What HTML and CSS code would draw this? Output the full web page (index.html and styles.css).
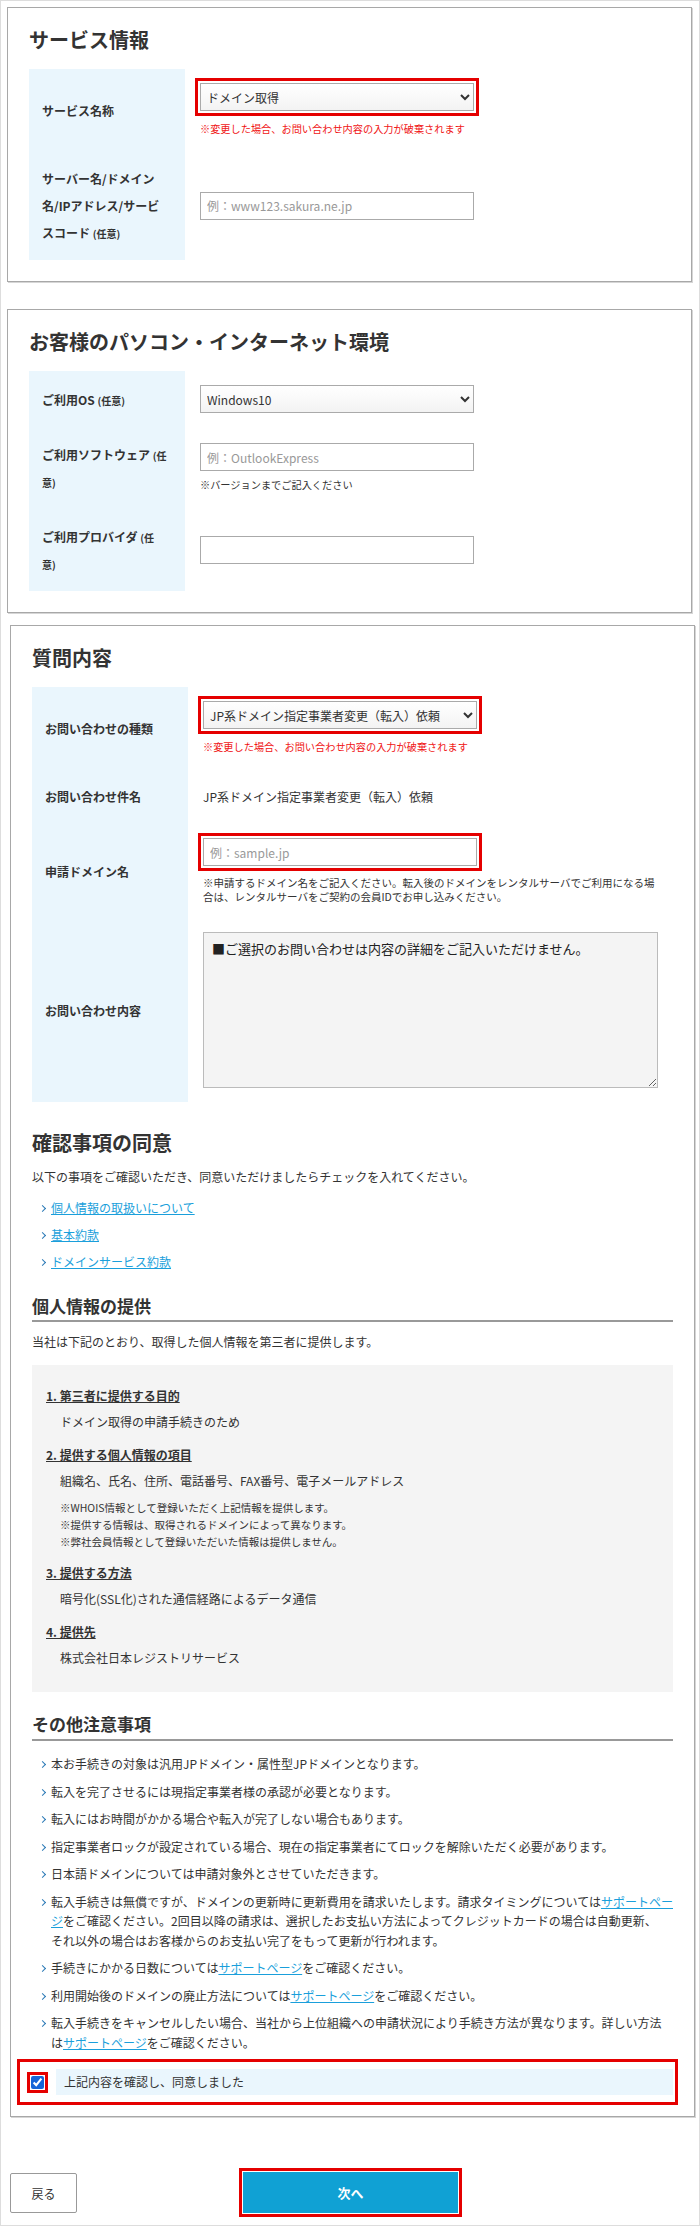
FILE: index.html
```html
<!DOCTYPE html>
<html lang="ja">

<head>
    <meta charset="utf-8">
    <title>お問い合わせフォーム</title>
    <link rel="stylesheet" href="styles.css">
</head>

<body>
    <div class="page">

        <section class="panel">
            <h2>サービス情報</h2>
            <table class="form">
                <tr>
                    <th>サービス名称</th>
                    <td>
                        <select class="field marked">
                            <option>ドメイン取得</option>
                        </select>
                        <p class="warn">※変更した場合、お問い合わせ内容の入力が破棄されます</p>
                    </td>
                </tr>
                <tr>
                    <th>サーバー名/ドメイン<br>名/IPアドレス/サービ<br>スコード <span class="opt">(任意)</span></th>
                    <td><input type="text" class="field" placeholder="例：www123.sakura.ne.jp"></td>
                </tr>
            </table>
        </section>

        <section class="panel">
            <h2>お客様のパソコン・インターネット環境</h2>
            <table class="form">
                <tr>
                    <th>ご利用OS <span class="opt">(任意)</span></th>
                    <td>
                        <select class="field">
                            <option>Windows10</option>
                        </select>
                    </td>
                </tr>
                <tr>
                    <th>ご利用ソフトウェア <span class="opt">(任<br>意)</span></th>
                    <td>
                        <input type="text" class="field" placeholder="例：OutlookExpress">
                        <p class="hint">※バージョンまでご記入ください</p>
                    </td>
                </tr>
                <tr>
                    <th>ご利用プロバイダ <span class="opt">(任<br>意)</span></th>
                    <td><input type="text" class="field"></td>
                </tr>
            </table>
        </section>

        <section class="panel qa">
            <h2>質問内容</h2>
            <table class="form">
                <tr>
                    <th>お問い合わせの種類</th>
                    <td>
                        <select class="field marked">
                            <option>JP系ドメイン指定事業者変更（転入）依頼</option>
                        </select>
                        <p class="warn">※変更した場合、お問い合わせ内容の入力が破棄されます</p>
                    </td>
                </tr>
                <tr>
                    <th>お問い合わせ件名</th>
                    <td class="value">JP系ドメイン指定事業者変更（転入）依頼</td>
                </tr>
                <tr>
                    <th>申請ドメイン名</th>
                    <td>
                        <input type="text" class="field marked" placeholder="例：sample.jp">
                        <p class="hint long">※申請するドメイン名をご記入ください。転入後のドメインをレンタルサーバでご利用になる場合は、レンタルサーバをご契約の会員IDでお申し込みください。</p>
                    </td>
                </tr>
                <tr>
                    <th>お問い合わせ内容</th>
                    <td><textarea class="detail" readonly>■ご選択のお問い合わせは内容の詳細をご記入いただけません。</textarea></td>
                </tr>
            </table>

            <h3>確認事項の同意</h3>
            <p class="lead">以下の事項をご確認いただき、同意いただけましたらチェックを入れてください。</p>
            <ul class="arrows links">
                <li><a href="#">個人情報の取扱いについて</a></li>
                <li><a href="#">基本約款</a></li>
                <li><a href="#">ドメインサービス約款</a></li>
            </ul>

            <h4>個人情報の提供</h4>
            <p class="lead after-rule">当社は下記のとおり、取得した個人情報を第三者に提供します。</p>
            <div class="provide">
                <dl>
                    <dt>1. 第三者に提供する目的</dt>
                    <dd>ドメイン取得の申請手続きのため</dd>
                    <dt>2. 提供する個人情報の項目</dt>
                    <dd>組織名、氏名、住所、電話番号、FAX番号、電子メールアドレス</dd>
                    <dd class="small">※WHOIS情報として登録いただく上記情報を提供します。<br>※提供する情報は、取得されるドメインによって異なります。<br>※弊社会員情報として登録いただいた情報は提供しません。</dd>
                    <dt>3. 提供する方法</dt>
                    <dd>暗号化(SSL化)された通信経路によるデータ通信</dd>
                    <dt>4. 提供先</dt>
                    <dd>株式会社日本レジストリサービス</dd>
                </dl>
            </div>

            <h4 class="other">その他注意事項</h4>
            <ul class="arrows notes">
                <li>本お手続きの対象は汎用JPドメイン・属性型JPドメインとなります。</li>
                <li>転入を完了させるには現指定事業者様の承認が必要となります。</li>
                <li>転入にはお時間がかかる場合や転入が完了しない場合もあります。</li>
                <li>指定事業者ロックが設定されている場合、現在の指定事業者にてロックを解除いただく必要があります。</li>
                <li>日本語ドメインについては申請対象外とさせていただきます。</li>
                <li>転入手続きは無償ですが、ドメインの更新時に更新費用を請求いたします。請求タイミングについては<a href="#">サポートページ</a>をご確認ください。2回目以降の請求は、選択したお支払い方法によってクレジットカードの場合は自動更新、<br>それ以外の場合はお客様からのお支払い完了をもって更新が行われます。</li>
                <li>手続きにかかる日数については<a href="#">サポートページ</a>をご確認ください。</li>
                <li>利用開始後のドメインの廃止方法については<a href="#">サポートページ</a>をご確認ください。</li>
                <li>転入手続きをキャンセルしたい場合、当社から上位組織への申請状況により手続き方法が異なります。詳しい方法は<a href="#">サポートページ</a>をご確認ください。</li>
            </ul>

            <div class="agree">
                <input type="checkbox" id="agree" checked>
                <label for="agree">上記内容を確認し、同意しました</label>
            </div>
        </section>

        <div class="actions">
            <button class="back">戻る</button>
            <button class="next">次へ</button>
        </div>

    </div>
</body>

</html>
```

FILE: styles.css
```css
* {
    box-sizing: border-box;
}

body {
    margin: 0;
    font-family: "Noto Sans CJK JP", "Noto Sans", sans-serif;
    font-size: 12px;
    color: #333;
    background-color: #fff;
}

.page {
    width: 700px;
    height: 2226px;
    border: 1px solid #ddd;
    padding: 6px 0 0 6px;
}

.panel {
    width: 685px;
    border: 1px solid #a8a8a8;
    box-shadow: 1px 1px 0 #d6d6d6;
    padding: 20px 21px 21px;
    background-color: #fff;
}

.panel + .panel {
    margin-top: 27px;
}

.panel.qa {
    margin-top: 12px;
    margin-left: 3px;
    padding-bottom: 16px;
}

h2 {
    margin: 0 0 17px;
    font-size: 20px;
    line-height: 24px;
    font-weight: bold;
}

/* form tables */
.form {
    width: 100%;
    border-collapse: collapse;
}

.form th {
    width: 156px;
    padding: 14px 13px;
    background-color: #eaf6fd;
    text-align: left;
    font-size: 12px;
    line-height: 27px;
    font-weight: bold;
    vertical-align: middle;
}

.form td {
    padding: 14px 15px;
    line-height: 16px;
    vertical-align: middle;
}

.opt {
    font-size: 10px;
    line-height: 10px;
}

.field {
    display: block;
    width: 274px;
    height: 28px;
    margin: 0;
    border: 1px solid #aaa;
    background-color: #fff;
    padding: 0 6px;
    font-family: inherit;
    font-size: 12px;
    color: #333;
}

select.field {
    padding: 0 2px;
    background-image: linear-gradient(#fff, #f3f3f3);
}

.field::placeholder {
    color: #999;
}

.marked {
    outline: 3px solid #e50000;
    outline-offset: 2px;
}

.warn {
    margin: 10px 0 0;
    font-size: 10.2px;
    line-height: 16px;
    color: #f01616;
}

.hint {
    margin: 6px 0 0;
    font-size: 10.2px;
    line-height: 16px;
}

.hint.long {
    margin-top: 10px;
    font-size: 10.5px;
    line-height: 14px;
}

.detail {
    display: block;
    width: 455px;
    height: 156px;
    margin: 0;
    padding: 8px 8px;
    border: 1px solid #bbb;
    background-color: #f4f4f4;
    font-family: inherit;
    font-size: 13px;
    line-height: 16px;
    color: #222;
}

/* consent */
h3 {
    margin: 29px 0 13px;
    font-size: 20px;
    line-height: 24px;
}

h4 {
    margin: 20px 0 0;
    padding-bottom: 3px;
    border-bottom: 2px solid #999;
    font-size: 17px;
    line-height: 22px;
}

h4.other {
    margin-top: 21px;
    padding-bottom: 4px;
}

.lead {
    margin: 0;
    line-height: 18px;
}

.lead.after-rule {
    margin-top: 11px;
}

a {
    color: #1a9fdb;
    text-decoration: underline;
}

.arrows {
    list-style: none;
    margin: 0;
    padding: 0 0 0 19px;
}

.arrows li {
    text-indent: -11px;
}

.arrows li::before {
    content: "";
    display: inline-block;
    width: 4px;
    height: 4px;
    margin-right: 6px;
    border-top: 1.5px solid #2a78b6;
    border-right: 1.5px solid #2a78b6;
    transform: rotate(45deg);
    vertical-align: middle;
    position: relative;
    top: -1px;
}

.links {
    margin-top: 8px;
}

.links li {
    line-height: 27px;
}

.provide {
    margin-top: 14px;
    padding: 21px 14px 24px;
    background-color: #f4f4f4;
}

.provide dl {
    margin: 0;
}

.provide dt {
    margin-top: 13px;
    font-weight: bold;
    text-decoration: underline;
    line-height: 20px;
}

.provide dt:first-child {
    margin-top: 0;
}

.provide dd {
    margin: 6px 0 0 14px;
    line-height: 20px;
}

.provide dd.small {
    margin-top: 8px;
    margin-bottom: 2px;
    font-size: 10.5px;
    line-height: 17px;
}

.notes {
    margin-top: 9px;
}

.notes li {
    padding: 4px 0;
    line-height: 19.5px;
}

.agree {
    display: flex;
    align-items: center;
    margin: 8px 0 0 -10px;
    padding: 5px 0 5px 9px;
    outline: 3px solid #e50000;
    outline-offset: 2px;
}

.agree input {
    width: 13px;
    height: 13px;
    margin: 0;
    accent-color: #1565d8;
    outline: 3px solid #e50000;
    outline-offset: 1px;
}

.agree label {
    flex: 1;
    margin-left: 12px;
    padding-left: 8px;
    line-height: 26px;
    background-color: #eaf6fd;
}

/* buttons */
.actions {
    display: grid;
    grid-template-columns: 1fr auto 1fr;
    align-items: start;
    width: 687px;
    margin-top: 55px;
}

button {
    font-family: inherit;
    cursor: pointer;
}

.back {
    justify-self: start;
    width: 67px;
    height: 40px;
    margin: 1px 0 0 3px;
    border: 1px solid #999;
    border-radius: 2px;
    background-color: #fff;
    font-size: 12px;
    color: #333;
}

.next {
    width: 215px;
    height: 41px;
    border: none;
    background-color: #10a1d4;
    color: #fff;
    font-size: 13px;
    font-weight: bold;
    outline: 3px solid #e50000;
    outline-offset: 1px;
}
```
